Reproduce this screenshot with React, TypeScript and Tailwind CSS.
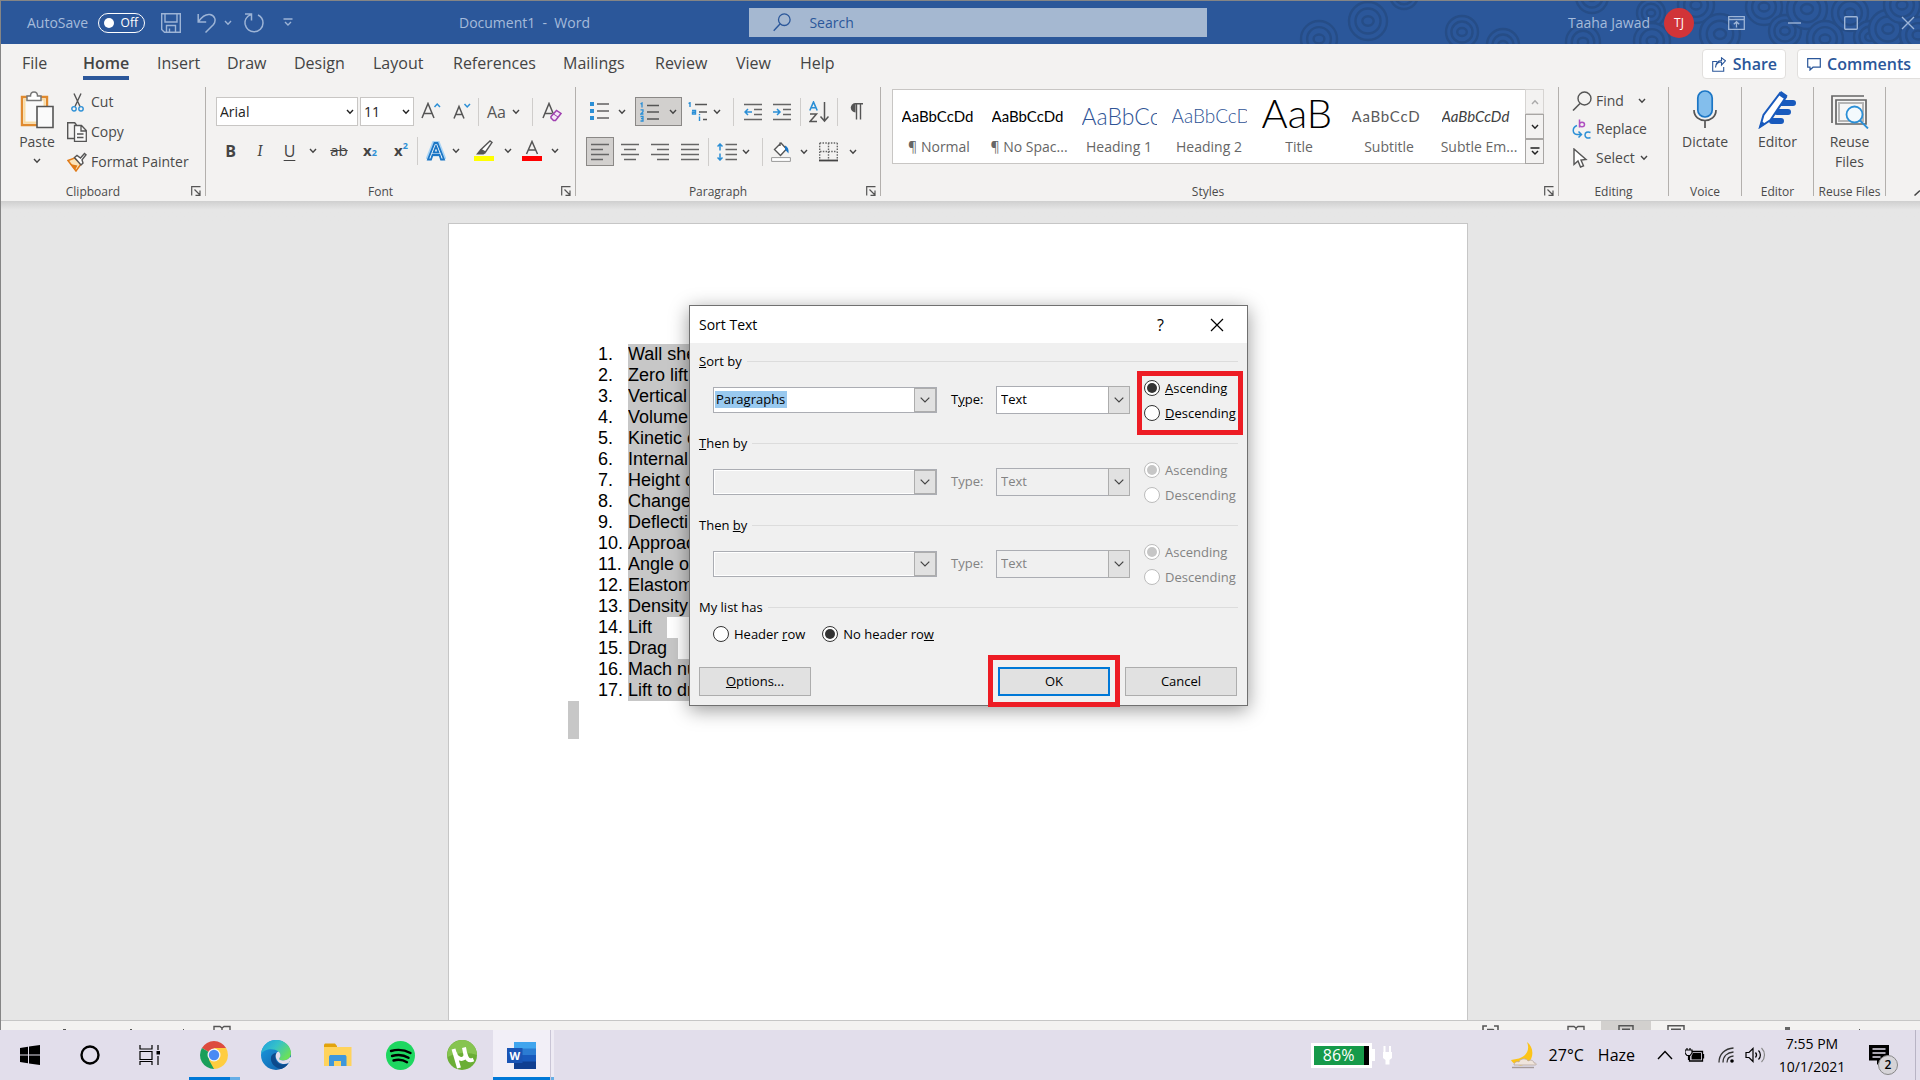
import React from "react";

type Kids = { children?: React.ReactNode };

function Svg({ w, h, className = "", children }: { w: number; h: number; className?: string } & Kids) {
  return (
    <svg width={w} height={h} viewBox={`0 0 ${w} ${h}`} fill="none" aria-hidden="true" className={`shrink-0 ${className}`}>
      {children}
    </svg>
  );
}

function Chevron({ className = "", color = "#444" }: { className?: string; color?: string }) {
  return (
    <Svg w={8} h={6} className={className}>
      <path d="M1 1l3 3.2L7 1" stroke={color} strokeWidth="1.4" />
    </Svg>
  );
}

function Tool({ label, className = "", children }: { label: string; className?: string } & Kids) {
  return (
    <button aria-label={label} className={`flex h-[29px] shrink-0 items-center justify-center ${className}`}>
      {children}
    </button>
  );
}

function Rule({ className = "" }: { className?: string }) {
  return <div className={`h-7 w-px shrink-0 bg-[#cfcdcb] ${className}`} />;
}

function Launcher() {
  return (
    <button aria-label="More options" className="absolute bottom-[5px] right-1">
      <Svg w={10} h={10}>
        <path d="M.7 9.5V.7H9.5M3.5 3.5L9 9M9 4.5V9.3H4.5" stroke="#555" strokeWidth="1.2" />
      </Svg>
    </button>
  );
}

function Group({ name, className = "", launcher = false, children }: { name: string; className?: string; launcher?: boolean } & Kids) {
  return (
    <>
      <section aria-label={name} className={`relative flex h-[114px] flex-col ${className}`}>
        <div className="min-h-0 flex-1">{children}</div>
        <div className="h-[18px] whitespace-nowrap text-center text-xs leading-[18px] text-[#4a4a4a]">{name}</div>
        {launcher && <Launcher />}
      </section>
      <div className="h-[109px] w-px shrink-0 bg-[#b3b0ad]" />
    </>
  );
}

/* ---------- title bar ---------- */

const rings: [number, number, number][] = [
  [39, 38, 18], [88, 20, 19], [124, -6, 14], [182, 31, 16], [223, 44, 16], [312, -4, 16], [303, 41, 17], [371, 12, 14],
  [372, 40, 18], [416, 4, 18], [440, 33, 20], [484, 6, 18], [505, 30, 16], [527, 8, 20], [545, 38, 18], [570, 12, 18],
  [590, 36, 16], [608, 28, 19], [622, 4, 18], [638, 34, 18],
];

function TitleBar() {
  const ink = "#9db4d6";
  return (
    <header className="relative flex h-[43px] shrink-0 items-center overflow-hidden bg-[#2b579a] text-sm text-[#a5bbdb]">
      <Svg w={640} h={44} className="absolute right-0 top-0">
        {rings.map(([x, y, r]) => (
          <g key={`${x}-${y}`} stroke="#264d87" strokeWidth="2.4">
            <circle cx={x} cy={y} r={r} fill="#2b579a" />
            <circle cx={x} cy={y} r={r * 0.66} />
            <ellipse cx={x} cy={y} rx={r * 0.3} ry={r * 0.25} />
          </g>
        ))}
      </Svg>
      <div className="relative flex w-[39%] items-center pl-[26px]">
        <span className="w-[71px]">AutoSave</span>
        <button role="switch" aria-checked="false" className="flex h-5 w-[47px] items-center justify-between rounded-full border border-white pl-[5px] pr-[6px] text-xs text-white">
          <span className="size-[10px] rounded-full bg-white" />
          Off
        </button>
        <button aria-label="Save" className="ml-4">
          <Svg w={20} h={20}>
            <path d="M.7.7h18.6v18.6H3.5L.7 16.5zM4 1v8h12V1M5.5 19v-6.500h9V19M8.500 19v-3.500" stroke={ink} strokeWidth="1.400" />
          </Svg>
        </button>
        <button aria-label="Undo" className="ml-4 flex items-center">
          <Svg w={19} h={20}>
            <path d="M1.200 1v8h8M1.500 8.500C5 3.500 9 .8 13 1.500c5 1 6.500 6 3.500 10L8.500 19.500" stroke={ink} strokeWidth="1.500" />
          </Svg>
          <Chevron color={ink} className="ml-2" />
        </button>
        <button aria-label="Repeat" className="ml-3">
          <Svg w={20} h={21}>
            <path d="M1 2h6.500v6.500M7 2.500C2 4.500.5 9 1.200 12.500 2.300 17 6 19.800 10 19.800c5 0 9-4 9-8.800 0-3.500-1.800-6.500-5-8" stroke={ink} strokeWidth="1.500" />
          </Svg>
        </button>
        <button aria-label="Customize Quick Access Toolbar" className="ml-[19px]">
          <Svg w={10} h={9}>
            <path d="M.5 1h9M2 4l3 3 3-3" stroke={ink} strokeWidth="1.400" />
          </Svg>
        </button>
        <span className="ml-[166px] whitespace-pre">Document1  -  Word</span>
      </div>
      <label className="relative flex h-[29px] w-[458px] items-center bg-[#a5b8d1] pl-6 text-[#2b579a]">
        <Svg w={18} h={19}>
          <circle cx="11.300" cy="6.700" r="5.800" stroke="#2b579a" strokeWidth="1.300" />
          <path d="M7.200 10.800L.7 17.800" stroke="#2b579a" strokeWidth="1.400" />
        </Svg>
        <input placeholder="Search" aria-label="Search" className="ml-[18px] min-w-0 flex-1 bg-transparent outline-none placeholder:text-[#2b579a]" />
      </label>
      <div className="relative flex flex-1 items-center justify-end pr-[5px]">
        <span>Taaha Jawad</span>
        <span className="ml-[14px] grid size-[30px] place-items-center rounded-full bg-[#d13438] text-xs text-white">TJ</span>
        <button aria-label="Ribbon display options" className="ml-[34px]">
          <Svg w={17} h={14}>
            <path d="M.7.7h15.600v12.600H.7zM1 3.500h15M8.500 11.500V6M5.800 8.300L8.500 5.700l2.700 2.600" stroke={ink} strokeWidth="1.300" />
          </Svg>
        </button>
        <button aria-label="Minimize" className="ml-[43px]">
          <Svg w={13} h={14}><path d="M0 7h13" stroke={ink} strokeWidth="1.400" /></Svg>
        </button>
        <button aria-label="Maximize" className="ml-[43px]">
          <Svg w={14} h={14}><rect x=".7" y=".7" width="12.600" height="12.600" rx="1" stroke={ink} strokeWidth="1.400" /></Svg>
        </button>
        <button aria-label="Close" className="ml-[43px]">
          <Svg w={14} h={14}><path d="M1 1l12 12M13 1L1 13" stroke={ink} strokeWidth="1.400" /></Svg>
        </button>
      </div>
    </header>
  );
}

/* ---------- tabs ---------- */

const tabs = [
  ["File", "w-[61px]"], ["Home", "w-[74px]"], ["Insert", "w-[70px]"], ["Draw", "w-[67px]"], ["Design", "w-[79px]"],
  ["Layout", "w-[80px]"], ["References", "w-[110px]"], ["Mailings", "w-[92px]"], ["Review", "w-[81px]"], ["View", "w-[64px]"], ["Help", "w-[50px]"],
];

function TabBar() {
  return (
    <nav className="flex h-10 shrink-0 items-center overflow-hidden bg-[#f3f2f1] pl-[21px] text-base text-[#444]">
      {tabs.map(([t, w]) => (
        <div key={t} className={`flex h-full items-start ${w}`}>
          <button className={t === "Home" ? "mt-[6px] h-[30px] border-b-4 border-[#2b579a] font-semibold leading-6" : "mt-[6px] h-[30px] border-b-4 border-transparent leading-6"}>
            {t}
          </button>
        </div>
      ))}
      <div className="-mr-2 ml-auto flex gap-[11px] font-semibold text-[#2b579a]">
        <button className="flex h-[30px] items-center gap-[7px] rounded-sm border border-[#e1dfdd] bg-white pl-[9px] pr-2">
          <Svg w={14} h={15}>
            <path d="M5 4.500H.7v9.800h11V10M3.500 10.500C4 6.500 6.500 5 9.500 5V8l4-4.200L9.500.8v2.700C6 3.700 3.700 6.500 3.500 10.500z" stroke="#2b579a" strokeWidth="1.100" />
          </Svg>
          Share
        </button>
        <button className="flex h-[30px] items-center gap-[6px] whitespace-nowrap rounded-sm border border-[#e1dfdd] bg-white pl-[9px] pr-4">
          <Svg w={14} h={13}>
            <path d="M.7.7h12.600v8.500H6L3 12V9.200H.7z" stroke="#2b579a" strokeWidth="1.200" />
          </Svg>
          Comments
        </button>
      </div>
    </nav>
  );
}

/* ---------- ribbon icons ---------- */

const G = "#666";
const B = "#2b8fd6";

function Lines({ rows }: { rows: [number, number][] }) {
  return (
    <Svg w={18} h={18}>
      {rows.map(([a, b], i) => (
        <path key={i} d={`M${a} ${1.500 + i * 5}H${b}`} stroke={G} strokeWidth="1.500" />
      ))}
    </Svg>
  );
}

function PasteIcon() {
  return (
    <Svg w={34} h={38}>
      <path d="M2 6h25v28H2z" fill="#fafafa" stroke="#e08a2e" strokeWidth="2.400" />
      <path d="M4.500 8.500h20v23h-20z" stroke="#f9dca3" strokeWidth="2" />
      <path d="M7 9.500V5h3.500C10.500 2.500 12 1 14 1s3.500 1.500 3.500 4H21v4.500z" fill="#fff" stroke="#777" strokeWidth="1.500" />
      <path d="M17 15.500h16v21H17z" fill="#fafafa" stroke="#555" strokeWidth="1.600" />
    </Svg>
  );
}

function CutIcon() {
  return (
    <Svg w={13} h={19}>
      <path d="M3 .5l6 13M10 .5L4 13.500" stroke="#555" strokeWidth="1.400" />
      <circle cx="3" cy="15.800" r="2.200" stroke={B} strokeWidth="1.400" />
      <circle cx="10" cy="15.800" r="2.200" stroke={B} strokeWidth="1.400" />
    </Svg>
  );
}

function CopyIcon() {
  return (
    <Svg w={20} h={20}>
      <path d="M8 16.500H.7V.7h7L9.500 3" stroke="#555" strokeWidth="1.400" />
      <path d="M7.500 3.500h7l4.800 5v10.800H7.500zM14 4v5h5M10 12h6.500M10 15.500h6.500" fill="#fafafa" stroke="#555" strokeWidth="1.300" />
    </Svg>
  );
}

function PainterIcon() {
  return (
    <Svg w={20} h={20}>
      <path d="M1 8.500l6.500-2.500 6.500 6-5 7z" fill="#fbe3b8" stroke="#e07b18" strokeWidth="1.500" />
      <path d="M3 12l5 6 2.500-4.500z" fill="#e07b18" />
      <path d="M7.500 5.500L10 3.500l3.500 2.500L17.500 1.500l1.500 1.300-4 5 1 3.200-2 2z" fill="#fff" stroke="#555" strokeWidth="1.400" />
    </Svg>
  );
}

function SplitDown({ label, w = "w-[26px]" }: { label: string; w?: string }) {
  return <Tool label={label} className={w}><Chevron /></Tool>;
}

function Combo({ label, value, className }: { label: string; value: string; className: string }) {
  return (
    <div className={`relative h-[29px] shrink-0 ${className}`}>
      <select aria-label={label} defaultValue={value} className="h-full w-full appearance-none border border-[#c8c6c4] bg-white pl-[3px] text-sm text-[#222]">
        <option>{value}</option>
      </select>
      <Chevron className="pointer-events-none absolute right-1 top-3" color="#222" />
    </div>
  );
}

function FontGroup() {
  return (
    <Group name="Font" launcher className="w-[369px] shrink-0 pl-[10px] [&>div:nth-child(2)]:-ml-[30px]">
      <div className="mt-[10px] flex items-center">
        <Combo label="Font" value="Arial" className="w-[142px]" />
        <Combo label="Font size" value="11" className="ml-[2px] w-[54px]" />
        <Tool label="Grow font" className="ml-[6px] w-[22px]">
          <Svg w={20} h={20}>
            <path d="M1 16L7 1.500 13 16M3 11.500h8" stroke="#555" strokeWidth="1.500" />
            <path d="M13.500 5l2.700-3L19 5" stroke={B} strokeWidth="1.500" />
          </Svg>
        </Tool>
        <Tool label="Shrink font" className="ml-[10px] w-[20px]">
          <Svg w={18} h={20}>
            <path d="M1 16.500L6 4.500l5 12M2.800 12.500h6.400" stroke="#555" strokeWidth="1.500" />
            <path d="M11.500 2l2.700 3L17 2" stroke={B} strokeWidth="1.500" />
          </Svg>
        </Tool>
        <Rule className="ml-[6px]" />
        <Tool label="Change case" className="ml-[8px] gap-[6px] text-base text-[#555]">Aa<Chevron /></Tool>
        <Rule className="ml-[12px]" />
        <Tool label="Clear formatting" className="ml-[8px] w-[22px]">
          <Svg w={20} h={20}>
            <path d="M1 16L7 1.500l5 12M3 11.500h7" stroke="#555" strokeWidth="1.500" />
            <path d="M9 14.500l5.500-6 4.500 3-5.500 7h-2L9 16z" fill="#f3e6f6" stroke="#a040b0" strokeWidth="1.500" />
            <path d="M11.500 12l4.500 3" stroke="#a040b0" />
          </Svg>
        </Tool>
      </div>
      <div className="mt-[10px] flex items-center text-base leading-none text-[#444]">
        <Tool label="Bold" className="w-[29px] font-bold">B</Tool>
        <Tool label="Italic" className="w-[30px] font-serif italic">I</Tool>
        <Tool label="Underline" className="w-[29px] underline underline-offset-[3px]">U</Tool>
        <SplitDown label="Underline styles" w="w-[18px]" />
        <Tool label="Strikethrough" className="ml-[5px] w-[24px] text-[15px] line-through">ab</Tool>
        <Tool label="Subscript" className="ml-[10px] w-[18px] text-[15px] font-bold">x<sub className="text-[9px] text-[#2b8fd6]">2</sub></Tool>
        <Tool label="Superscript" className="ml-[13px] w-[18px] text-[15px] font-bold">x<sup className="text-[9px] text-[#2b8fd6]">2</sup></Tool>
        <Rule className="ml-[7px]" />
        <Tool label="Text effects" className="ml-[8px] w-[20px]">
          <Svg w={20} h={20}>
            <path d="M2 18.500L8.500 2h3L18 18.500M6 13h8" stroke="#a9d4f5" strokeWidth="5" />
            <path d="M2 18.500L8.500 2h3L18 18.500h-3L13.500 14h-7L5 18.500zM7.500 11.500h5L10 5z" fill="#fff" stroke="#1b76c5" strokeWidth="1.800" />
          </Svg>
        </Tool>
        <SplitDown label="Text effect options" w="w-[20px]" />
        <Tool label="Highlight color" className="ml-[7px] w-[22px]">
          <Svg w={20} h={22}>
            <path d="M7 9.500L16 1l2 1.500-6.500 9.500z" fill="#fff" stroke="#555" strokeWidth="1.400" />
            <path d="M6.500 9l5.500 4-2.500 1.500H2z" fill="#555" />
            <path d="M0 16h20v5H0z" fill="#ff0" />
          </Svg>
        </Tool>
        <SplitDown label="Highlight options" />
        <Tool label="Font color" className="w-[22px]">
          <Svg w={20} h={22}>
            <path d="M4.500 14L10 1.500 15.500 14M6.500 10h7" stroke="#555" strokeWidth="1.500" />
            <path d="M0 16h20v5H0z" fill="#f00" />
          </Svg>
        </Tool>
        <SplitDown label="Font color options" w="w-[23px]" />
      </div>
    </Group>
  );
}

function ParagraphGroup() {
  return (
    <Group name="Paragraph" launcher className="w-[304px] shrink-0 pl-[10px] [&>div:nth-child(2)]:-ml-[30px]">
      <div className="mt-[10px] flex items-center">
        <Tool label="Bullets" className="ml-1">
          <Svg w={19} h={19}>
            {[0, 7, 14].map((y) => (
              <g key={y}><path d={`M0 ${y}h4v4H0z`} fill={B} /><path d={`M7 ${y + 2}h12`} stroke="#555" strokeWidth="1.400" /></g>
            ))}
          </Svg>
        </Tool>
        <SplitDown label="Bullet library" />
        <Tool label="Numbering" className="w-[47px] border border-[#8a8886] bg-[#d2d0ce]">
          <Svg w={19} h={20}>
            <path d="M7 3.500h12M7 10h12M7 17h12" stroke="#555" strokeWidth="1.400" />
            <path d="M.5 2L2 1v4.500M.5 7.800h2.500v2L.8 12H3.500M.5 14.500H3V19H.5M1 16.700h2" stroke={B} strokeWidth="1.300" />
          </Svg>
          <Chevron className="ml-[10px]" />
        </Tool>
        <Tool label="Multilevel list" className="ml-[6px]">
          <Svg w={19} h={20}>
            <path d="M7 2.500h12M11 10h8M15 17.500h4" stroke="#555" strokeWidth="1.400" />
            <path d="M.5 1.500L2 .7V5M4 8.500h3.500V12H4.500v-1.700h3M11.500 14.500V19M11.500 12v1.200" stroke={B} strokeWidth="1.400" />
          </Svg>
        </Tool>
        <SplitDown label="Multilevel options" w="w-[20px]" />
        <Rule className="ml-[6px]" />
        {["Decrease indent", "Increase indent"].map((l, i) => (
          <Tool key={l} label={l} className="ml-[9px] w-[20px]">
            <Svg w={18} h={18}>
              <path d="M0 1.500h18M10 6.500h8M10 11.500h8M0 16.500h18" stroke={G} strokeWidth="1.500" />
              <path d={i ? "M0 9h7M4 6l3 3-3 3" : "M8 9H1M4 6L1 9l3 3"} stroke={B} strokeWidth="1.500" />
            </Svg>
          </Tool>
        ))}
        <Rule className="ml-[8px]" />
        <Tool label="Sort" className="ml-[8px] w-[20px]">
          <Svg w={20} h={22}>
            <path d="M.8 9.500L4.500 1l3.700 8.500M2 6.800h5" stroke={B} strokeWidth="1.600" />
            <path d="M1 13h6.500L1 20.500h7M15.500 1v19M11.500 15.500l4 4.500 4-4.500" stroke="#555" strokeWidth="1.500" />
          </Svg>
        </Tool>
        <Rule className="ml-[8px]" />
        <Tool label="Show formatting marks" className="ml-[11px] w-[14px]">
          <Svg w={13} h={17}>
            <path d="M5.500 0A4.600 4.600 0 005.500 9.500z" fill="#555" />
            <path d="M5 .8h8M6.500 1v15.500M10.500 1v15.500" stroke="#555" strokeWidth="1.400" />
          </Svg>
        </Tool>
      </div>
      <div className="mt-[11px] flex items-center">
        <Tool label="Align left" className="w-[28px] border border-[#8a8886] bg-[#d2d0ce]"><Lines rows={[[0, 18], [0, 12], [0, 18], [0, 12]]} /></Tool>
        <Tool label="Center" className="ml-[7px] w-[18px]"><Lines rows={[[0, 18], [3, 15], [0, 18], [3, 15]]} /></Tool>
        <Tool label="Align right" className="ml-[12px] w-[18px]"><Lines rows={[[0, 18], [6, 18], [0, 18], [6, 18]]} /></Tool>
        <Tool label="Justify" className="ml-[12px] w-[18px]"><Lines rows={[[0, 18], [0, 18], [0, 18], [0, 18]]} /></Tool>
        <Rule className="ml-[9px]" />
        <Tool label="Line spacing" className="ml-[8px] gap-[5px]">
          <Svg w={20} h={18}>
            <path d="M8.500 1.500H20M8.500 6.500H20M8.500 11.500H20M8.500 16.500H20" stroke={G} strokeWidth="1.500" />
            <path d="M3 1v6.500M3 10.500V17M.5 3.500L3 1l2.500 2.500M.5 14.500L3 17l2.500-2.500" stroke={B} strokeWidth="1.500" />
          </Svg>
          <Chevron />
        </Tool>
        <Rule className="ml-[12px]" />
        <Tool label="Shading" className="ml-[8px] gap-[9px]">
          <Svg w={20} h={21}>
            <path d="M3.500 8.500L10 2l5.500 6-6 6.500zM9 5V1.500" fill="#fff" stroke="#555" strokeWidth="1.400" />
            <path d="M14 4.500c3 1.500 4 4 3.500 8-1.500-2-2.500-3-3.500-3.500z" fill="#1b76c5" />
            <path d="M.6 16.600h18.800v3.800H.6z" fill="#fff" stroke="#999" />
          </Svg>
          <Chevron />
        </Tool>
        <Tool label="Borders" className="ml-[11px] gap-[11px]">
          <Svg w={19} h={20}>
            <path d="M.7 1h17.600M.7 1v17M9.500 1v17M18.300 1v17M1 9.500h17" stroke="#666" strokeWidth="1.400" strokeDasharray="1.500 1.300" />
            <path d="M0 18.500h19" stroke="#444" strokeWidth="1.800" />
          </Svg>
          <Chevron />
        </Tool>
      </div>
    </Group>
  );
}

const styleCards = [
  ["¶ Normal", "AaBbCcDd", "text-[15px] leading-[26px] text-black"],
  ["¶ No Spac...", "AaBbCcDd", "text-[15px] leading-[26px] text-black"],
  ["Heading 1", "AaBbCc", "text-[23px] leading-[26px] font-light text-[#2f5496]"],
  ["Heading 2", "AaBbCcD", "text-[19px] leading-[26px] font-light text-[#2f5496]"],
  ["Title", "AaB", "text-[40px] leading-[32px] font-light text-black"],
  ["Subtitle", "AaBbCcD", "text-[15px] leading-[26px] tracking-wider text-[#5a5a5a]"],
  ["Subtle Em...", "AaBbCcDd", "text-[15px] leading-[26px] italic text-[#404040]"],
];

function StylesGroup() {
  return (
    <Group name="Styles" launcher className="min-w-0 flex-1 pl-[11px] pr-[14px] [&>div:nth-child(2)]:-ml-[20px]">
      <div className="mt-[2px] flex h-[75px] border border-[#c8c6c4] bg-white">
        <div className="flex min-w-0 flex-1 overflow-hidden pl-px">
          {styleCards.map(([name, sample, cls]) => (
            <button key={name} className="flex w-[90px] shrink-0 flex-col items-center pt-[9px]">
              <span className={`flex h-[30px] w-[75px] items-end overflow-hidden whitespace-nowrap font-['Lato'] ${cls}`}>{sample}</span>
              <span className="mt-2 whitespace-nowrap text-sm leading-5 text-[#666]">{name}</span>
            </button>
          ))}
        </div>
        <div className="-my-px -mr-px flex w-[19px] shrink-0 flex-col">
          <button aria-label="Scroll up" className="grid flex-1 place-items-center border border-[#d6d4d2] bg-[#f3f2f1]">
            <Chevron className="rotate-180" color="#aaa" />
          </button>
          <button aria-label="Scroll down" className="grid flex-1 place-items-center border border-[#a8a6a4] bg-[#f3f2f1]">
            <Chevron color="#222" />
          </button>
          <button aria-label="More styles" className="grid flex-1 place-items-center border border-[#a8a6a4] bg-[#f3f2f1]">
            <Svg w={10} h={9}><path d="M.5 1h9M2 4l3 3 3-3" stroke="#222" strokeWidth="1.500" /></Svg>
          </button>
        </div>
      </div>
    </Group>
  );
}

function Ribbon() {
  return (
    <div className="relative z-10 flex h-[117px] shrink-0 overflow-hidden bg-[#f3f2f1] pt-[3px] text-sm text-[#4a4a4a]">
      <Group name="Clipboard" launcher className="w-[204px] shrink-0 [&>div:nth-child(2)]:-ml-[20px]">
        <div className="flex">
          <button className="ml-[18px] flex w-9 flex-col items-center pt-1">
            <PasteIcon />
            <span className="mt-[3px] leading-5">Paste</span>
            <Chevron className="mt-[6px]" />
          </button>
          <div className="ml-[12px] flex flex-col">
            <button className="flex h-[30px] items-center"><span className="flex w-[24px] justify-center pr-1"><CutIcon /></span>Cut</button>
            <button className="flex h-[30px] items-center"><span className="w-[24px]"><CopyIcon /></span>Copy</button>
            <button className="flex h-[30px] items-center whitespace-nowrap"><span className="w-[24px]"><PainterIcon /></span>Format Painter</button>
          </div>
        </div>
      </Group>
      <FontGroup />
      <ParagraphGroup />
      <StylesGroup />
      <Group name="Editing" className="w-[109px] shrink-0">
        <div className="ml-[13px] flex flex-col items-start">
          <button className="flex h-[27px] items-center">
            <span className="w-6"><Svg w={20} h={20}>
              <circle cx="12.500" cy="7.500" r="6.500" stroke="#555" strokeWidth="1.400" /><path d="M8 12.500L1 19.500" stroke="#555" strokeWidth="1.600" />
            </Svg></span>Find<Chevron className="ml-[14px]" />
          </button>
          <button className="flex h-[30px] items-center">
            <span className="w-6"><Svg w={20} h={20}>
              <path d="M7.500.5v8M7.500 5.500c0-3 5-3 5 0s-5 3-5 0" stroke="#b04fc0" strokeWidth="1.500" />
              <path d="M5 6.500C0 8.500 0 14.500 5 15.500h4M6.500 12.500l3 3-3 3M18.500 13.500c-3-1.500-5.500 0-5.500 2.500s2.500 4 5.500 2.500" stroke={B} strokeWidth="1.500" />
            </Svg></span>Replace
          </button>
          <button className="flex h-[28px] items-center">
            <span className="w-6"><Svg w={18} h={20}>
              <path d="M2 1v15.500l4-3.500 2.500 6 3-1.200L9 12l5-.5z" fill="#fff" stroke="#555" strokeWidth="1.400" />
            </Svg></span>Select<Chevron className="ml-[5px]" />
          </button>
        </div>
      </Group>
      <Group name="Voice" className="w-[72px] shrink-0">
        <button className="flex w-full flex-col items-center pt-[3px]">
          <Svg w={24} h={39}>
            <rect x="4.800" y="1" width="14.400" height="26" rx="7" fill="#83beec" stroke="#1b76c5" strokeWidth="1.700" />
            <path d="M1 20c0 14 22 14 22 0M12 31v7" stroke="#555" strokeWidth="1.700" />
          </Svg>
          <span className="mt-[3px] leading-5">Dictate</span>
        </button>
      </Group>
      <Group name="Editor" className="w-[71px] shrink-0">
        <button className="flex w-full flex-col items-center pt-[3px]">
          <Svg w={40} h={39}>
            <path d="M22 13h13M19 22h11M14 31h9" stroke="#185abd" strokeWidth="6" strokeLinecap="round" />
            <path d="M2 37l3.500-12L22 3l6 4-15.500 23z" fill="#fff" stroke="#185abd" strokeWidth="2" />
            <path d="M20.500 5L23 1l6.500 4.500L27 9.500zM1 38l2.500-7 4 3z" fill="#185abd" />
          </Svg>
          <span className="mt-[3px] leading-5">Editor</span>
        </button>
      </Group>
      <Group name="Reuse Files" className="w-[71px] shrink-0">
        <button className="flex w-full flex-col items-center pt-2">
          <Svg w={38} h={34}>
            <path d="M1 28V1h32" stroke="#666" strokeWidth="1.700" />
            <path d="M5 28V5h30v24H5z" fill="#f6f6f6" stroke="#666" strokeWidth="1.700" />
            <path d="M8 26V8h24v18z" stroke="#b5b5b5" strokeWidth="2" />
            <circle cx="23.500" cy="19.500" r="8" fill="#f3f9fd" stroke={B} strokeWidth="1.800" />
            <path d="M29 25.500l8 8" stroke={B} strokeWidth="1.800" />
          </Svg>
          <span className="mt-[3px] leading-5">Reuse<br />Files</span>
        </button>
      </Group>
      <button aria-label="Collapse the ribbon" className="flex w-[34px] shrink-0 justify-end self-end pb-[5px]">
        <Svg w={6} h={6}><path d="M.5 5.500L6 .5" stroke="#444" strokeWidth="1.500" /></Svg>
      </button>
    </div>
  );
}

/* ---------- document ---------- */

const items = [
  "Wall she", "Zero lift", "Vertical", "Volume", "Kinetic e", "Internal", "Height o", "Change", "Deflecti",
  "Approac", "Angle o", "Elastom", "Density", "Lift", "Drag", "Mach nu", "Lift to dr",
];

function Doc() {
  return (
    <main className="min-h-0 flex-1 overflow-hidden bg-[#e6e6e6] pr-[5px]">
      <div className="-mr-[5px] h-[22px] bg-gradient-to-b from-[#cfcfcf] to-[#e6e6e6] to-40%" />
      <article className="mx-auto h-full w-[1020px] border border-[#c6c6c6] bg-white pl-[119px] pt-[120px] font-['Liberation_Sans'] text-lg leading-[21px] text-black">
        <ol className="pl-[30px]">
          {items.map((t, i) => (
            <li key={t} className="flex h-[21px]">
              <span className="w-[30px] shrink-0">{i + 1}.</span>
              <span className={`overflow-hidden whitespace-nowrap bg-[#c7c7c7] ${t === "Lift" ? "w-[39px]" : t === "Drag" ? "w-[50px]" : "w-[110px]"}`}>{t}</span>
            </li>
          ))}
        </ol>
        <div className="h-[38px] w-[11px] bg-[#c7c7c7]" />
      </article>
    </main>
  );
}

/* ---------- sort dialog ---------- */

function DropArrow({ label }: { label: string }) {
  return (
    <span aria-label={label} className="pointer-events-none absolute inset-y-0 right-0 grid w-[22px] place-items-center border border-[#adadad] bg-[#e1e1e1]">
      <Svg w={10} h={6}><path d="M.7.7L5 5 9.300.7" stroke="#444" strokeWidth="1.200" /></Svg>
    </span>
  );
}

const radioCls =
  "grid size-4 shrink-0 appearance-none place-items-center rounded-full border border-[#333] bg-white checked:before:size-[10px] checked:before:rounded-full checked:before:bg-[#333] disabled:border-[#bcbcbc] disabled:checked:before:bg-[#c6c6c6]";

function Legend({ children }: Kids) {
  return (
    <div className="flex items-center gap-[5px] leading-[18px]">
      <span>{children}</span>
      <span className="h-px flex-1 bg-[#dcdcdc]" />
    </div>
  );
}

function SortKey({ legend, id, active = false }: { legend: React.ReactNode; id: string; active?: boolean }) {
  const tone = active ? "text-black" : "text-[#838383]";
  return (
    <div className="h-[82px]">
      <Legend>{legend}</Legend>
      <div className={`flex items-center pl-[14px] pt-[7px] ${tone}`}>
        <div className="relative flex h-[26px] w-[224px] items-center border border-[#abadb3] bg-white p-px">
          {active ? (
            <select aria-label="Sort by" defaultValue="Paragraphs" className="h-[17px] appearance-none bg-[#99c9ef] px-px leading-[17px] text-black">
              <option>Paragraphs</option>
            </select>
          ) : (
            <select aria-label="Then by" disabled className="h-full w-full appearance-none bg-[#f0f0f0]" />
          )}
          <DropArrow label="Open" />
        </div>
        <label htmlFor={`${id}-type`} className="ml-[14px] w-[45px]">T{active ? <u>y</u> : "y"}pe:</label>
        <div className="relative h-7 w-[134px]">
          <select id={`${id}-type`} disabled={!active} className={`h-full w-full appearance-none border border-[#abadb3] pl-1 opacity-100 ${active ? "bg-white" : "bg-[#f0f0f0]"}`}>
            <option>Text</option>
          </select>
          <DropArrow label="Open" />
        </div>
        <div className="relative ml-[14px] flex flex-col gap-[7px] pt-[2px]">
          {active && <div className="absolute -left-[7px] -top-[6px] h-[64px] w-[106px] border-[5px] border-[#ed1c24]" />}
          <label className="relative flex h-[18px] items-center gap-[5px]">
            <input type="radio" name={id} defaultChecked disabled={!active} className={radioCls} />
            <span className="pt-[2px]">{active ? <u>A</u> : "A"}scending</span>
          </label>
          <label className="relative flex h-[18px] items-center gap-[5px]">
            <input type="radio" name={id} disabled={!active} className={radioCls} />
            <span className="pt-[2px]">{active ? <u>D</u> : "D"}escending</span>
          </label>
        </div>
      </div>
    </div>
  );
}

function SortDialog() {
  const btn = "h-[29px] w-28 border border-[#adadad] bg-[#e1e1e1]";
  return (
    <div role="dialog" aria-label="Sort Text" className="absolute left-[689px] top-[305px] z-20 w-[559px] border border-[#707070] bg-[#f0f0f0] text-[13px] text-black shadow-[0_4px_18px_rgba(0,0,0,0.4)]">
      <div className="flex h-[37px] items-center bg-white pl-[9px] pr-[23px] text-sm">
        <span className="flex-1">Sort Text</span>
        <button aria-label="Help" className="mr-[46px] text-base">?</button>
        <button aria-label="Close"><Svg w={14} h={14}><path d="M1 1l12 12M13 1L1 13" stroke="#000" strokeWidth="1.200" /></Svg></button>
      </div>
      <div className="px-[9px] pb-[9px] pt-[9px]">
        <SortKey id="key1" active legend={<><u>S</u>ort by</>} />
        <SortKey id="key2" legend={<><u>T</u>hen by</>} />
        <SortKey id="key3" legend={<>Then <u>b</u>y</>} />
        <Legend>My list has</Legend>
        <div className="flex gap-[17px] pl-[14px] pt-[9px]">
          <label className="flex h-[18px] items-center gap-[5px]">
            <input type="radio" name="header" className={radioCls} /><span className="pt-[2px]">Header <u>r</u>ow</span>
          </label>
          <label className="flex h-[18px] items-center gap-[5px]">
            <input type="radio" name="header" defaultChecked className={radioCls} /><span className="pt-[2px]">No header ro<u>w</u></span>
          </label>
        </div>
        <div className="mt-6 flex gap-[15px] pr-px">
          <button className={`mr-auto ${btn}`}><u>O</u>ptions...</button>
          <div className="relative">
            <button className="h-[29px] w-28 border-2 border-[#0078d7] bg-[#e1e1e1]">OK</button>
            <div className="pointer-events-none absolute -left-[10px] -top-[12px] h-[52px] w-[132px] border-[5px] border-[#ed1c24]" />
          </div>
          <button className={btn}>Cancel</button>
        </div>
      </div>
    </div>
  );
}

/* ---------- status bar and taskbar ---------- */

function StatusBar() {
  return (
    <footer className="flex h-[10px] shrink-0 items-start overflow-hidden border-t border-[#c6c6c6] bg-[#f3f2f1]">
      <Svg w={240} h={10}>
        <path d="M62 8.500h3M129 8.500h2M182 8.500h1" stroke="#555" />
        <path d="M213 10V5.500h6l2 1.500 2-1.500h6V10M221 7v3" stroke="#555" strokeWidth="1.400" />
      </Svg>
      <Svg w={440} h={10} className="ml-auto">
        <path d="M3 9V5h4M14 5h4v4M7 8.500h6l1 .5" stroke="#555" strokeWidth="1.600" />
        <path d="M88 10V5.500h6l2 1.500 2-1.500h6V10M96 7v3" stroke="#555" strokeWidth="1.400" />
        <path d="M121 0h50v10h-50z" fill="#d2d0ce" />
        <path d="M139 10V4.700h14V10M142 8.300h8" stroke="#555" strokeWidth="1.500" />
        <path d="M188 10V4.700h16V10M191 8.300h10" stroke="#555" strokeWidth="1.500" />
        <path d="M305 6h5v4h-5z" fill="#666" />
        <path d="M379 8.500h1" stroke="#555" />
      </Svg>
    </footer>
  );
}

function Pinned({ label, className = "w-[62px]", children }: { label: string; className?: string } & Kids) {
  return <button aria-label={label} className={`relative grid h-full shrink-0 place-items-center ${className}`}>{children}</button>;
}

function Taskbar() {
  return (
    <div className="flex h-[50px] shrink-0 items-center bg-[#e2deeb] text-sm text-black">
      <Pinned label="Start" className="w-[60px]">
        <Svg w={20} h={20}><path d="M0 3l8-1.200v7.700H0zM9 1.600L20 0v9.500H9zM0 10.500h8v7.700L0 17zM9 10.500h11V20L9 18.400z" fill="#000" /></Svg>
      </Pinned>
      <Pinned label="Cortana" className="w-[60px]">
        <Svg w={20} h={20}><circle cx="10" cy="10" r="8.500" stroke="#000" strokeWidth="2.400" /></Svg>
      </Pinned>
      <Pinned label="Task view" className="w-[60px]">
        <Svg w={22} h={20}>
          <path d="M1 0v4h12V0M1 6.500h12v8H1zM1 20v-3.500h12V20M19 0v5M19 11v9" stroke="#000" strokeWidth="1.200" />
          <path d="M17.500 6h3.500v3.500h-3.500z" fill="#000" />
        </Svg>
      </Pinned>
      <Pinned label="Chrome" className="ml-[3px] w-[62px]">
        <Svg w={28} h={28}>
          <path d="M14 14L1.900 7A14 14 0 0126.100 7z" fill="#dd4b3e" />
          <path d="M14 14L1.900 7A14 14 0 0014 28z" fill="#1a9f5a" />
          <path d="M14 28A14 14 0 0026.100 7H14v7z" fill="#ffcd40" />
          <path d="M14 7h12.100L20 17.500 14 28 9 19z" fill="#ffcd40" />
          <circle cx="14" cy="14" r="6.500" fill="#f4f4f4" />
          <circle cx="14" cy="14" r="5.200" fill="#4a8af4" />
        </Svg>
        <span className="absolute bottom-0 left-[6px] flex h-[3px] w-[51px] bg-[#0078d7]"><span className="ml-auto w-[10px] bg-[#66aee6]" /></span>
      </Pinned>
      <Pinned label="Edge">
        <svg width="30" height="30" viewBox="0 0 30 30" fill="none" aria-hidden="true">
          <defs>
            <linearGradient id="edgeTop" x1="0" y1="0" x2="1" y2=".6"><stop stopColor="#1f9de0" /><stop offset=".5" stopColor="#35c1c9" /><stop offset="1" stopColor="#6be05a" /></linearGradient>
            <linearGradient id="edgeLow" x1="0" y1="0" x2="1" y2="1"><stop stopColor="#1b9de2" /><stop offset="1" stopColor="#0f59a4" /></linearGradient>
          </defs>
          <circle cx="15" cy="15" r="15" fill="url(#edgeLow)" />
          <path d="M0 14C1 5 7.500 0 15 0c9 0 15 6.500 15 13 0 5-4 7.500-8 7.500-3 0-4.500-1.200-3.500-2.500 1.500-2 1.200-5-1-6.500C12 7.500 3 9 0 14z" fill="url(#edgeTop)" />
          <path d="M10 17c-1 6 4 11 10 12 3-1 6-3 7.500-6-6 3.500-13 1-13-6 0-2 .5-3 1-4-3 0-5 2-5.500 4z" fill="#0c4a8c" />
          <path d="M17.500 11.500c-3.500 1-4 7 0 10.500 3 2.500 7 2.500 10 1L31 18l-2-1c-2 2.700-4.500 3.500-7 3.500-3 0-4.500-1.200-3.500-2.500 1.500-2 1.200-5-1-6.500z" fill="#e2deeb" />
        </svg>
      </Pinned>
      <Pinned label="File Explorer">
        <Svg w={28} h={24}>
          <path d="M0 1.500L1 .5h10l2 2.500v3H0z" fill="#e2a30c" />
          <path d="M0 4h27.500v19H0z" fill="#ffd35c" />
          <path d="M5 23V13.500l1-1.500h15.500l1 1.500V23h-5.500v-5h-7v5z" fill="#3e97db" />
        </Svg>
      </Pinned>
      <Pinned label="Spotify">
        <Svg w={29} h={29}>
          <circle cx="14.500" cy="14.500" r="14.500" fill="#1ed760" />
          <path d="M5 10c7-2 14-1 19.500 2M6 15c6-1.600 12-1 16.500 1.800M7.500 19.500c4.500-1.200 9.500-.8 13.500 1.700" stroke="#000" strokeWidth="2.400" strokeLinecap="round" />
        </Svg>
      </Pinned>
      <Pinned label="uTorrent">
        <Svg w={30} h={30}>
          <circle cx="15" cy="15" r="15" fill="#6aae35" />
          <path d="M15 0a15 15 0 0115 15c-8-3-20-3-29.500 2A15 15 0 0115 0z" fill="#86c450" />
          <path d="M6.500 9l5.500 19M8 13c1.500 7 10 8 10.500 2L17 7.500M18.500 14c1 5 3 7.500 8 5.500" stroke="#fff" strokeWidth="4" />
        </Svg>
      </Pinned>
      <Pinned label="Word" className="w-[58px] border-r border-[#c9c5d6] bg-[#f2eff7]">
        <Svg w={30} h={28}>
          <path d="M7 1h22v7H7z" fill="#41a5ee" /><path d="M7 7.500h22v7H7z" fill="#2b7cd3" />
          <path d="M7 14h22v7H7z" fill="#185abd" /><path d="M7 20.500h22V28H7z" fill="#103f91" />
          <path d="M0 7h15.500v15H0z" fill="#1a55b5" />
          <text x="7.700" y="18.500" textAnchor="middle" fontSize="11" fontWeight="bold" fontFamily="Open Sans" fill="#fff">W</text>
        </Svg>
        <span className="absolute bottom-0 left-0 h-[3px] w-full bg-[#0078d7]" />
      </Pinned>
      <span className="h-full w-[3px] self-stretch border-b-[3px] border-[#66aee6] bg-[#eeebf4]" />

      <div className="ml-auto flex h-full items-center">
        <span className="flex h-[25px] w-[61px] border-[3px] border-white bg-black">
          <span className="w-[50px] bg-[#169a4a] text-center text-base leading-[19px] text-white">86%</span>
        </span>
        <span className="h-3 w-[3px] bg-white" />
        <Svg w={11} h={19} className="ml-[7px]">
          <path d="M1 6h9v6l-2.500 2v4.500h-4V14L1 12z" fill="#fff" /><path d="M2.500 0v6M8 0v6" stroke="#fff" strokeWidth="2" />
        </Svg>
        <Svg w={28} h={28} className="ml-[117px]">
          <path d="M17 1c3 7 0 14-8 16.500L1 19c3 6 12 7 17 3 6-5 6-16-1-21z" fill="#fcc419" />
          <path d="M4 24c0-3 3-4 5-3 1-4 8-4 9-1 3-2 6 0 6 2 3 0 3 2 1 2z" fill="#efe4dc" stroke="#b8a79e" strokeWidth=".8" />
          <path d="M2 26.500h22" stroke="#a59a9a" strokeWidth="1.400" />
        </Svg>
        <span className="ml-[11px] text-base">27°C</span>
        <span className="ml-[14px] text-base">Haze</span>
        <button aria-label="Hidden icons" className="ml-[22px]"><Svg w={16} h={10}><path d="M1 9l7-7.500L15 9" stroke="#000" strokeWidth="1.400" /></Svg></button>
        <Svg w={20} h={14} className="ml-3">
          <path d="M4.500 3.500h13v9.500h-13zM18.500 6v4.500" stroke="#000" strokeWidth="1.300" /><path d="M8 5h8v6.500H6.500V8z" fill="#000" />
          <path d="M0 2h7v3L5 7.500H2L0 5zM2 0v2M5 0v2M3.500 7v5" fill="#e2deeb" stroke="#000" strokeWidth="1.200" />
        </Svg>
        <Svg w={16} h={16} className="ml-[13px]">
          <path d="M1 15.500C1 7 7 1.500 15.500 1M5 15.500C5 9.500 9 5.500 15.500 5M9 15.500C9 12 11.500 9.300 15.500 9" stroke="#333" strokeWidth="1.300" />
          <circle cx="14" cy="14" r="1.800" fill="#000" />
        </Svg>
        <Svg w={21} h={18} className="ml-[11px]">
          <path d="M1 6.500h3l4-4v13l-4-4H1z" stroke="#000" strokeWidth="1.200" />
          <path d="M10.500 6.500c1.300 1.500 1.300 3.500 0 5M13.500 4.500c2.500 2.500 2.500 6.500 0 9" stroke="#000" strokeWidth="1.200" />
          <path d="M16.500 2c4 4 4 10 0 14" stroke="#888" strokeWidth="1.200" />
        </Svg>
        <div className="ml-[10px] w-[72px] text-center leading-[23px]">7:55 PM<br />10/1/2021</div>
        <button aria-label="Notifications" className="relative ml-[21px] mr-[16px] w-[30px]">
          <Svg w={20} h={20}>
            <path d="M0 0h20v15.500h-8L8 20v-4.500H0z" fill="#000" /><path d="M3.500 4h13M3.500 8h13M3.500 12h8" stroke="#e2deeb" strokeWidth="1.500" />
          </Svg>
          <span className="absolute left-[9px] top-[10px] grid size-5 place-items-center rounded-full border border-[#888] bg-[#d6d4d8] text-xs font-semibold">2</span>
        </button>
        <span className="mr-1 h-full w-px bg-[#b8b4c4]" />
      </div>
    </div>
  );
}

export default function App() {
  return (
    <div className="relative flex h-screen flex-col overflow-hidden font-['Open_Sans',sans-serif]">
      <div className="flex min-h-0 flex-1 flex-col overflow-hidden border-l border-t border-[#858585]">
        <TitleBar />
        <TabBar />
        <Ribbon />
        <Doc />
        <StatusBar />
      </div>
      <Taskbar />
      <SortDialog />
    </div>
  );
}
